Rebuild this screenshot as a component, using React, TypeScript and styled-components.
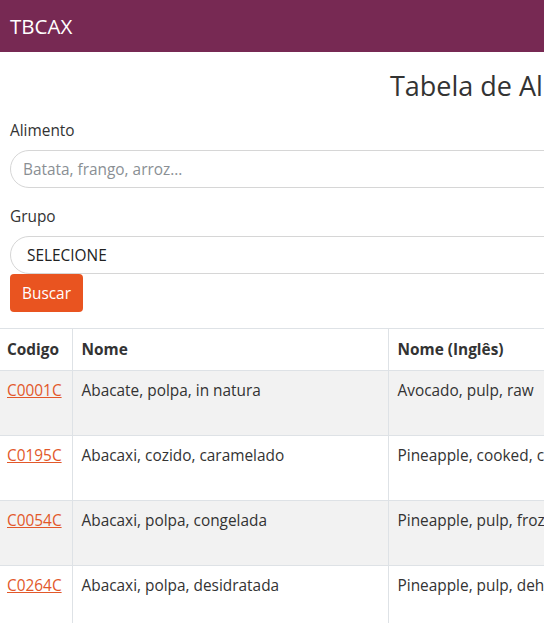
import React from "react";
import styled, { createGlobalStyle } from "styled-components";

const Global = createGlobalStyle`
  html, body { margin: 0; padding: 0; overflow: hidden; background: #fff; }
  body { font-family: "Open Sans", "Noto Sans", sans-serif; font-size: 15.4px; color: #333; }
  * { box-sizing: border-box; }
`;

const Navbar = styled.header`
  height: 52px;
  background: #772953;
  display: flex;
  align-items: center;
  padding: 0 10px;
  width: 1035px;
`;

const Brand = styled.span`
  color: #fff;
  font-size: 20.5px;
  font-weight: 500;
`;

const Main = styled.main`
  width: 1035px;
`;

const Title = styled.h1`
  margin: 0;
  height: 68px;
  display: flex;
  align-items: center;
  justify-content: center;
  padding-bottom: 2px;
  font-size: 27px;
  font-weight: 400;
  color: #333;
`;

const Form = styled.form`
  padding: 0 10px;
  display: flex;
  flex-direction: column;
`;

const Label = styled.label`
  display: block;
  line-height: 20px;
  padding-top: 1px;
  margin-bottom: 9px;
`;

const Field = styled.div`
  margin-bottom: 18px;
  &:last-of-type { margin-bottom: 0; }
`;

const Input = styled.input`
  display: block;
  width: 100%;
  height: 38px;
  border: 1px solid #d6d6d6;
  border-radius: 19px;
  padding: 0 12px;
  font: inherit;
  color: #333;
  &::placeholder { color: #8a8f94; }
`;

const Select = styled.select`
  display: block;
  width: 100%;
  height: 38px;
  border: 1px solid #d6d6d6;
  border-radius: 19px;
  padding: 0 16px;
  font: inherit;
  color: #222;
  background: #fff;
  appearance: none;
`;

const Button = styled.button`
  align-self: flex-start;
  height: 38px;
  padding: 0 12px;
  border: none;
  border-radius: 4px;
  background: #e95420;
  color: #fff;
  font: inherit;
`;

const Table = styled.table`
  margin-top: 16px;
  border-collapse: collapse;
  table-layout: fixed;
  width: 1035px;
`;

const Th = styled.th<{ w: number }>`
  width: ${(p) => p.w}px;
  text-align: left;
  font-weight: 700;
  padding: 10px 9px 9px;
  line-height: 22px;
  border-top: 1px solid #dee2e6;
  border-bottom: 1px solid #dee2e6;
  border-left: 1px solid #dee2e6;
  &:first-child { border-left: none; padding-left: 7px; }
`;

const Row = styled.tr<{ striped: boolean; h: number }>`
  height: ${(p) => p.h}px;
  background: ${(p) => (p.striped ? "#f2f2f2" : "#fff")};
`;

const Td = styled.td`
  vertical-align: top;
  padding: 9px 9px;
  line-height: 22px;
  border-top: 1px solid #dee2e6;
  border-left: 1px solid #dee2e6;
  &:first-child { border-left: none; padding-left: 7px; }
`;

const Code = styled.a`
  color: #e2582a;
  text-decoration: underline;
`;

const rows = [
  ["C0001C", "Abacate, polpa, in natura", "Avocado, pulp, raw", "Persea americana Mill.", "Frutas e derivados"],
  ["C0195C", "Abacaxi, cozido, caramelado", "Pineapple, cooked, caramelized", "Ananas comosus (L.) Merrill", "Frutas e derivados"],
  ["C0054C", "Abacaxi, polpa, congelada", "Pineapple, pulp, frozen", "Ananas comosus (L.) Merrill", "Frutas e derivados"],
  ["C0264C", "Abacaxi, polpa, desidratada", "Pineapple, pulp, dehydrated", "Ananas comosus (L.) Merrill", "Frutas e derivados"],
];

export default function App() {
  return (
    <>
      <Global />
      <Navbar>
        <Brand>TBCAX</Brand>
      </Navbar>
      <Main>
        <Title>Tabela de Alimentos</Title>
        <Form onSubmit={(e) => e.preventDefault()}>
          <Field>
            <Label htmlFor="alimento">Alimento</Label>
            <Input id="alimento" placeholder="Batata, frango, arroz..." />
          </Field>
          <Field>
            <Label htmlFor="grupo">Grupo</Label>
            <Select id="grupo" defaultValue="">
              <option value="">SELECIONE</option>
            </Select>
          </Field>
          <Button type="submit">Buscar</Button>
        </Form>
        <Table>
          <thead>
            <tr>
              <Th w={72}>Codigo</Th>
              <Th w={316}>Nome</Th>
              <Th w={260}>Nome (Inglês)</Th>
              <Th w={215}>Nome Científico</Th>
              <Th w={172}>Grupo</Th>
            </tr>
          </thead>
          <tbody>
            {rows.map((r, i) => (
              <Row key={r[0]} striped={i % 2 === 0} h={i === 3 ? 52 : 65}>
                <Td>
                  <Code href="#">{r[0]}</Code>
                </Td>
                <Td>{r[1]}</Td>
                <Td>{r[2]}</Td>
                <Td>{r[3]}</Td>
                <Td>{r[4]}</Td>
              </Row>
            ))}
          </tbody>
        </Table>
      </Main>
    </>
  );
}
